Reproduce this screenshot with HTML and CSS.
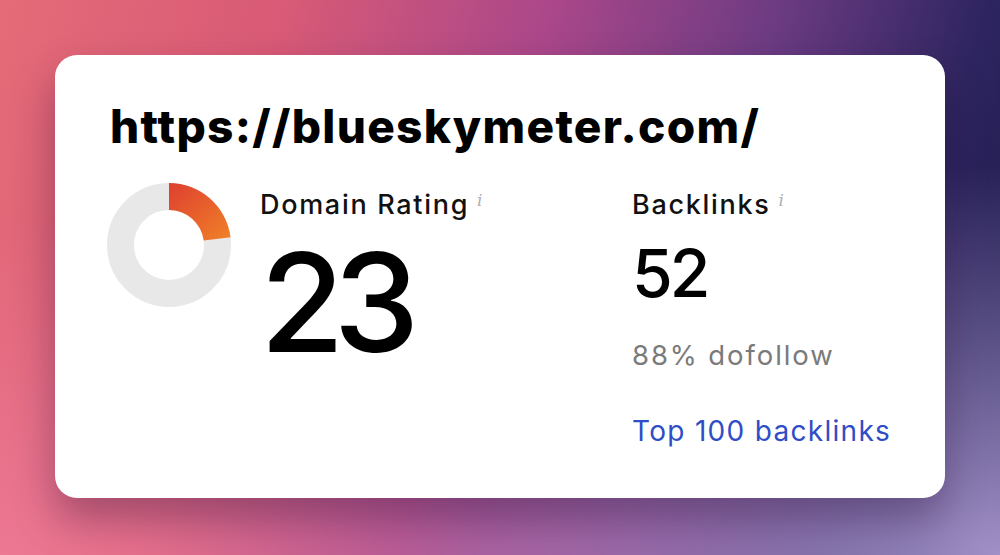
FILE: index.html
```html
<!DOCTYPE html>
<html lang="en">
<head>
<meta charset="utf-8">
<title>Bluesky Meter</title>
<link rel="stylesheet" href="styles.css">
</head>
<body>
<div class="card">
  <h1 class="url">https://blueskymeter.com/</h1>
  <div class="stats">
    <svg class="donut" width="124" height="124" viewBox="0 0 124 124" aria-hidden="true">
      <defs>
        <linearGradient id="seg" x1="62" y1="0" x2="118" y2="60" gradientUnits="userSpaceOnUse">
          <stop offset="0" stop-color="#de3f2f"/>
          <stop offset="1" stop-color="#f08028"/>
        </linearGradient>
      </defs>
      <circle cx="62" cy="62" r="48.5" fill="none" stroke="#e8e8e8" stroke-width="27"/>
      <path d="M62 0 A62 62 0 0 1 123.5 54.2 L96.7 57.6 A35 35 0 0 0 62 27 Z" fill="url(#seg)"/>
    </svg>
    <div class="metric dr">
      <div class="label">Domain Rating<span class="info">i</span></div>
      <div class="big">23</div>
    </div>
    <div class="metric bl">
      <div class="label">Backlinks<span class="info">i</span></div>
      <div class="mid">52</div>
      <div class="sub">88% dofollow</div>
      <a class="link" href="#">Top 100 backlinks</a>
    </div>
  </div>
</div>
</body>
</html>
```

FILE: styles.css
```css
html, body {
  margin: 0;
  padding: 0;
}
body {
  width: 1000px;
  height: 555px;
  overflow: hidden;
  font-family: Inter, "Liberation Sans", sans-serif;
  background:
    radial-gradient(ellipse 60% 70% at 100% 100%, rgba(168,150,206,0.95) 0%, rgba(168,150,206,0) 100%),
    radial-gradient(ellipse 50% 60% at 0% 100%, rgba(238,122,150,0.9) 0%, rgba(238,122,150,0) 100%),
    radial-gradient(ellipse 40% 30% at 50% 100%, rgba(176,96,160,0.8) 0%, rgba(176,96,160,0) 100%),
    linear-gradient(105deg, #e56b78 0%, #d85a76 25%, #ab478a 48%, #6c3b82 68%, #2e2560 86%, #1a1a48 100%);
  padding: 55px;
  box-sizing: border-box;
}
.card {
  background: #fff;
  border-radius: 22px;
  height: 443px;
  box-sizing: border-box;
  padding: 44px 55px 0 55px;
  box-shadow: 0 22px 40px rgba(40, 10, 50, 0.35);
}
.url {
  margin: 0;
  font-family: Inter, "Liberation Sans", sans-serif;
  font-weight: 800;
  font-size: 46px;
  line-height: 1.2;
  letter-spacing: 1.3px;
  color: #000;
}
.stats {
  display: flex;
  margin-top: 23px;
}
.donut {
  flex: none;
  margin-left: -3px;
  margin-top: 6px;
}
.metric {
  display: flex;
  flex-direction: column;
  flex: none;
  white-space: nowrap;
}
.dr {
  margin-left: 29px;
  width: 372px;
}
.label {
  font-size: 27px;
  line-height: 34px;
  font-weight: 500;
  color: #111;
  letter-spacing: 1.7px;
  margin-top: 6px;
}
.info {
  font-family: "DejaVu Serif", serif;
  font-style: italic;
  font-weight: 400;
  font-size: 17px;
  color: #b0b0b0;
  vertical-align: 8px;
  margin-left: 8px;
  letter-spacing: 0;
}
.big {
  font-size: 137px;
  line-height: 1;
  font-weight: 500;
  letter-spacing: -11px;
  color: #000;
  margin-top: 12px;
}
.mid {
  font-size: 66px;
  line-height: 1;
  font-weight: 500;
  letter-spacing: -3px;
  color: #000;
  margin-top: 18px;
}
.sub {
  font-size: 27.5px;
  color: #7a7a7a;
  margin-top: 32px;
  letter-spacing: 1.9px;
}
.link {
  font-size: 28px;
  color: #2f4dc6;
  text-decoration: none;
  margin-top: 42px;
  letter-spacing: 1.3px;
}
```
